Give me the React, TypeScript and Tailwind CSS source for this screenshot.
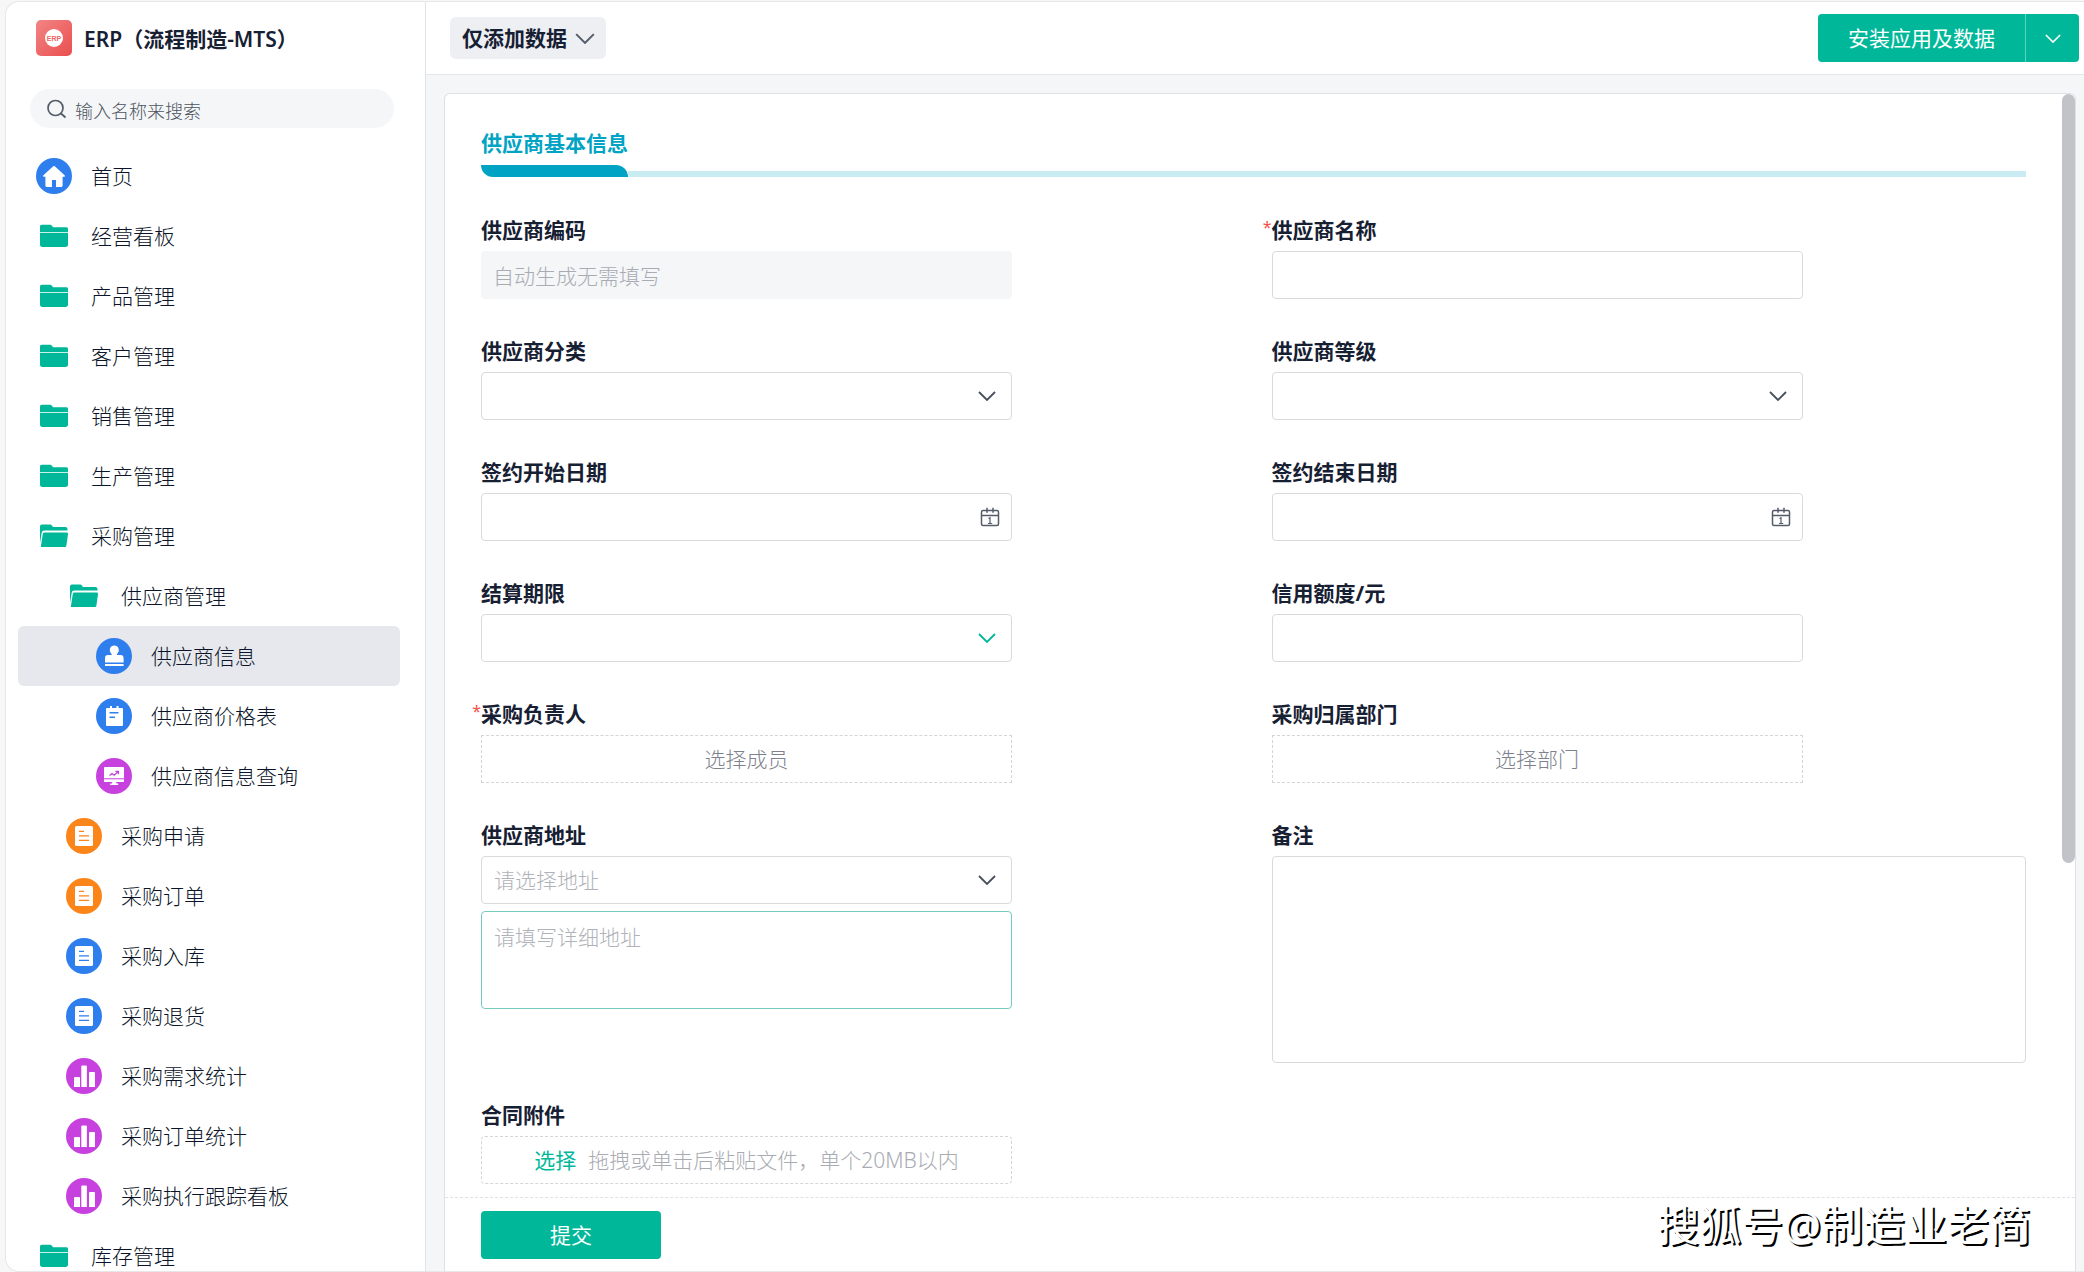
import React from "react";

type IconKind = "home" | "folder" | "folderOpen" | "stamp" | "note" | "screen" | "doc" | "chart";

type NavItem = { label: string; icon: IconKind; tone?: "blue" | "orange" | "purple"; level: 0 | 1 | 2; active?: boolean };

const NAV: NavItem[] = [
  { label: "首页", icon: "home", tone: "blue", level: 0 },
  { label: "经营看板", icon: "folder", level: 0 },
  { label: "产品管理", icon: "folder", level: 0 },
  { label: "客户管理", icon: "folder", level: 0 },
  { label: "销售管理", icon: "folder", level: 0 },
  { label: "生产管理", icon: "folder", level: 0 },
  { label: "采购管理", icon: "folderOpen", level: 0 },
  { label: "供应商管理", icon: "folderOpen", level: 1 },
  { label: "供应商信息", icon: "stamp", tone: "blue", level: 2, active: true },
  { label: "供应商价格表", icon: "note", tone: "blue", level: 2 },
  { label: "供应商信息查询", icon: "screen", tone: "purple", level: 2 },
  { label: "采购申请", icon: "doc", tone: "orange", level: 1 },
  { label: "采购订单", icon: "doc", tone: "orange", level: 1 },
  { label: "采购入库", icon: "doc", tone: "blue", level: 1 },
  { label: "采购退货", icon: "doc", tone: "blue", level: 1 },
  { label: "采购需求统计", icon: "chart", tone: "purple", level: 1 },
  { label: "采购订单统计", icon: "chart", tone: "purple", level: 1 },
  { label: "采购执行跟踪看板", icon: "chart", tone: "purple", level: 1 },
  { label: "库存管理", icon: "folder", level: 0 },
];

const INDENT = { 0: "pl-[18px]", 1: "pl-[48px]", 2: "pl-[78px]" };
const TONE = { blue: "#2f7eee", orange: "#fc8519", purple: "#c741de" };

function NavIcon({ kind, tone }: { kind: IconKind; tone?: keyof typeof TONE }) {
  const c = tone ? TONE[tone] : "#00b899";
  return (
    <svg viewBox="0 0 36 36" className="size-9 shrink-0" aria-hidden="true">
      {tone && <circle cx="18" cy="18" r="18" fill={c} />}
      {kind === "home" && (
        <path
          fill="#fff"
          d="M17.2 8.3a1.2 1.2 0 0 1 1.6 0l9.8 8.9c.6.6.3 1.6-.6 1.6h-1.400v8.600c0 .9-.6 1.500-1.400 1.500H20v-7h-4v7h-5.200c-.8 0-1.400-.6-1.400-1.500v-8.600H8c-.9 0-1.200-1-.6-1.600z"
        />
      )}
      {kind === "folder" && (
        <>
          <path fill={c} d="M4 14V8.500C4 7.400 4.800 6.700 5.800 6.700h8.400c.8 0 1.300.4 1.700 1l1.200 1.500h13.200c1 0 1.700.7 1.700 1.700V14z" />
          <path fill="#c9f0e8" d="M4 14h28v1H4z" />
          <path fill={c} d="M4 15h28v11.800c0 1.300-1 2.200-2.200 2.200H6.200C5 29 4 28.100 4 26.800z" />
        </>
      )}
      {kind === "folderOpen" && (
        <>
          <path fill={c} d="M4 25V8.500C4 7.400 4.800 6.500 5.800 6.500h8.400c.8 0 1.300.4 1.700 1L17 9h12.300c1.200 0 2.200.9 2.200 2v1.500H8.500c-1.500 0-2.500.8-2.800 2.200z" />
          <path fill={c} d="M8.600 14.600h22c.9 0 1.500.7 1.400 1.600l-1.600 11.300c-.2 1-.9 1.500-1.900 1.500H4.800l2-13c.2-.9.900-1.400 1.800-1.400z" />
        </>
      )}
      {kind === "stamp" && (
        <>
          <path
            fill="#fff"
            d="M18.300 7.600a4.600 4.600 0 0 1 3.200 7.900c-.6.600-.7 1-.7 1.600h4c1.600 0 2.800 1.200 2.800 2.800v4.600H9v-4.600c0-1.600 1.200-2.800 2.800-2.800h4c0-.6-.1-1-.7-1.600a4.600 4.600 0 0 1 3.200-7.900z"
          />
          <rect x="9" y="26" width="18.600" height="2" fill="#fff" />
        </>
      )}
      {kind === "note" && (
        <>
          <rect x="10" y="10" width="17" height="18" rx="1" fill="#fff" />
          <path fill="#fff" d="M14 8h2v3h-2zM20.500 8h2v3h-2z" />
          <path stroke={c} strokeWidth="1.400" d="M13.500 14.800h9M13.500 19.200h5.500" />
        </>
      )}
      {kind === "screen" && (
        <>
          <rect x="8" y="9" width="20" height="15" rx=".8" fill="#fff" />
          <path stroke={c} strokeWidth="1" d="M8 20.800h20" />
          <path fill="none" stroke={c} strokeWidth="1.300" d="m13.500 17.500 2.500-2 2.200 1.700 4-3.700M19.400 13.300h3v3" />
          <path fill="#fff" d="M16.500 24h3.500l.6 1.500h1.600V27h-8v-1.500h1.700z" />
        </>
      )}
      {kind === "doc" && (
        <>
          <rect x="9" y="8" width="18" height="20" rx="1.600" fill="#fff" />
          <path stroke={c} strokeWidth="1.300" d="M13 13.400h5M13 17.800h10M13 22.400h10" />
        </>
      )}
      {kind === "chart" && (
        <path
          fill="#fff"
          d="M9 18.900h4a1 1 0 0 1 1 1V29H8v-9.100a1 1 0 0 1 1-1zM16.300 7.400h3.600a1 1 0 0 1 1 1V29h-5.600V8.400a1 1 0 0 1 1-1zM24 14h4a1 1 0 0 1 1 1v14h-6V15a1 1 0 0 1 1-1z"
        />
      )}
    </svg>
  );
}

function Chevron({ className }: { className: string }) {
  return (
    <svg viewBox="0 0 18 10" className={className} fill="none" stroke="currentColor" strokeWidth="1.800" aria-hidden="true">
      <path d="m1 1 8 8 8-8" />
    </svg>
  );
}

function CalendarIcon() {
  return (
    <svg viewBox="0 0 20 20" className="pointer-events-none absolute right-3 top-1/2 size-5 -translate-y-1/2 text-[#545b69]" fill="none" stroke="currentColor" strokeWidth="1.500" aria-hidden="true">
      <rect x="1.500" y="3.500" width="17" height="15" rx="1.500" />
      <path d="M1.500 8.500h17M7 .8v5M13 .8v5" />
      <path strokeWidth="1.200" d="M8.500 11.500 10 10.800v5.700M8 16.500h4.200" />
    </svg>
  );
}

const LABEL = "mb-1.5 block text-[21px] leading-[30px] font-bold";
const BOX = "h-12 w-full rounded border border-[#d8dade] bg-white px-3 text-[21px] font-light outline-none placeholder:text-[#b9bbc1]";
const PICKER = "h-12 w-full border border-dashed border-[#d3d5d9] pt-0.5 font-light text-[#7d828d]";

function Field({ id, label, required, wide, children }: { id: string; label: string; required?: boolean; wide?: boolean; children: React.ReactNode }) {
  return (
    <div className={wide ? "w-full" : "w-[531px] max-w-full"}>
      <label htmlFor={id} className={LABEL + " relative"}>
        {required && <span className="absolute right-full text-base font-normal text-[#f0514a]">*</span>}
        {label}
      </label>
      {children}
    </div>
  );
}

function SelectBox({ id, placeholder, tone }: { id: string; placeholder?: string; tone?: string }) {
  return (
    <div className="relative">
      <select id={id} className={BOX + " appearance-none pt-0.5 text-[#b0b2b9]"} defaultValue="">
        <option value="">{placeholder ?? ""}</option>
      </select>
      <Chevron className={"pointer-events-none absolute right-4 top-1/2 h-[10px] w-[18px] -translate-y-1/2 " + (tone ?? "text-[#474e5d]")} />
    </div>
  );
}

function DateBox({ id }: { id: string }) {
  return (
    <div className="relative">
      <input id={id} type="text" className={BOX} />
      <CalendarIcon />
    </div>
  );
}

export default function App() {
  return (
    <div className="h-screen overflow-hidden bg-[#f7f7f8] pt-px pl-[5px] font-['Noto_Sans','Noto_Sans_CJK_SC',sans-serif] text-[21px] text-[#172033]">
      <div className="flex h-full overflow-hidden rounded-l-[14px] border border-r-0 border-[#e6e7e9] bg-white">
        <aside className="flex w-[420px] shrink-0 flex-col border-r border-[#e1e3e6]">
          <div className="flex h-[72px] shrink-0 items-center gap-3 pl-[30px]">
            <svg viewBox="0 0 36 36" className="size-9" aria-hidden="true">
              <defs>
                <linearGradient id="logo" x1="0" y1="0" x2="1" y2="1">
                  <stop offset="0" stopColor="#f28585" />
                  <stop offset="1" stopColor="#ea4e4e" />
                </linearGradient>
              </defs>
              <rect width="36" height="36" rx="5" fill="url(#logo)" />
              <circle cx="18" cy="18" r="9" fill="#fff" />
              <text x="18" y="20.500" textAnchor="middle" fontSize="7" fontWeight="700" fill="#ee6464" fontFamily="Liberation Sans">ERP</text>
            </svg>
            <h1 className="pt-1 font-semibold">ERP（流程制造-MTS）</h1>
          </div>
          <div className="mt-[15px] mr-[31px] mb-[18px] ml-6 flex h-[39px] shrink-0 items-center gap-2 rounded-full bg-[#f4f6f8] pl-[17px]">
            <svg viewBox="0 0 20 20" className="size-5 text-[#545b69]" fill="none" stroke="currentColor" strokeWidth="1.700" aria-hidden="true">
              <circle cx="8.500" cy="9" r="7.500" />
              <path d="m14 14.500 4.500 4" />
            </svg>
            <input type="search" aria-label="输入名称来搜索" placeholder="输入名称来搜索" className="min-w-0 flex-1 bg-transparent pt-1 text-lg font-light outline-none placeholder:text-[#4d5460]" />
          </div>
          <nav className="min-h-0 flex-1 overflow-hidden pr-[25px] pl-3">
            {NAV.map((n) => (
              <a
                key={n.label}
                href="#"
                aria-current={n.active ? "page" : undefined}
                className={"flex h-[60px] items-center gap-[19px] rounded-md font-light " + INDENT[n.level] + (n.active ? " bg-[#e6e8ed]" : "")}
              >
                <NavIcon kind={n.icon} tone={n.tone} />
                <span className="pt-0.5 whitespace-nowrap text-[#0b1428]">{n.label}</span>
              </a>
            ))}
          </nav>
        </aside>

        <main className="flex min-w-0 flex-1 flex-col bg-[#f4f6f8]">
          <header className="flex h-[73px] shrink-0 items-center justify-between border-b border-[#e6e7e9] bg-white pr-[5px] pl-6">
            <button type="button" className="flex h-[42px] items-center gap-2 rounded-md bg-[#edeff3] pr-[11px] pl-3 font-bold">
              <span className="pt-0.5">仅添加数据</span>
              <Chevron className="h-[11px] w-5 text-[#545b69]" />
            </button>
            <div className="flex h-12 overflow-hidden rounded bg-[#00b899] text-white">
              <button type="button" className="px-[30px] pt-0.5">安装应用及数据</button>
              <button type="button" aria-label="更多安装选项" className="flex w-[54px] items-center justify-center border-l border-[#5fd2be]">
                <Chevron className="h-[9px] w-4" />
              </button>
            </div>
          </header>

          <form className="relative mt-[18px] mr-2 ml-[18px] flex min-h-0 flex-1 flex-col rounded-t-md border border-b-0 border-[#dfe1e5] bg-white" onSubmit={(e) => e.preventDefault()}>
            <div className="min-h-0 flex-1 overflow-hidden pt-[33px] pr-[49px] pl-9">
              <div className="mb-[38px] flex items-end">
                <h2 className="font-bold text-[#00a3c4]">
                  <span className="mb-[5px] block leading-[33px]">供应商基本信息</span>
                  <span className="block h-3 rounded-tr-xl rounded-bl-xl bg-[#00a3c4]" />
                </h2>
                <div className="h-1.5 flex-1 bg-[#c9ecf2]" />
              </div>

              <div className="grid grid-cols-2 gap-x-9 gap-y-[37px]">
                <Field id="code" label="供应商编码">
                  <input id="code" disabled placeholder="自动生成无需填写" className="h-12 w-full rounded bg-[#f4f6f8] px-3 pt-0.5 font-light placeholder:text-[#a9abb3]" />
                </Field>
                <Field id="name" label="供应商名称" required>
                  <input id="name" type="text" className={BOX} />
                </Field>
                <Field id="category" label="供应商分类">
                  <SelectBox id="category" />
                </Field>
                <Field id="grade" label="供应商等级">
                  <SelectBox id="grade" />
                </Field>
                <Field id="start" label="签约开始日期">
                  <DateBox id="start" />
                </Field>
                <Field id="end" label="签约结束日期">
                  <DateBox id="end" />
                </Field>
                <Field id="term" label="结算期限">
                  <SelectBox id="term" tone="text-[#00b899]" />
                </Field>
                <Field id="credit" label="信用额度/元">
                  <input id="credit" type="text" className={BOX} />
                </Field>
                <Field id="owner" label="采购负责人" required>
                  <button id="owner" type="button" className={PICKER}>选择成员</button>
                </Field>
                <Field id="dept" label="采购归属部门">
                  <button id="dept" type="button" className={PICKER}>选择部门</button>
                </Field>
                <Field id="region" label="供应商地址">
                  <SelectBox id="region" placeholder="请选择地址" />
                  <textarea aria-label="详细地址" placeholder="请填写详细地址" className="mt-[7px] block h-[98px] w-full resize-none rounded border border-[#74cbbd] px-3 py-2.5 leading-[30px] font-light outline-none placeholder:text-[#b0b2b9]" />
                </Field>
                <Field id="remark" label="备注" wide>
                  <textarea id="remark" className="block h-[207px] w-full resize-none rounded border border-[#d8dade] px-3 py-2 outline-none" />
                </Field>
                <Field id="contract" label="合同附件">
                  <label className="flex h-12 w-full cursor-pointer items-center justify-center gap-3 rounded border border-dashed border-[#d3d5d9] pt-0.5 font-light">
                    <input id="contract" type="file" className="sr-only" />
                    <span className="font-normal text-[#00b899]">选择</span>
                    <span className="text-[#a9abb3]">拖拽或单击后粘贴文件，单个20MB以内</span>
                  </label>
                </Field>
              </div>
            </div>

            <div className="flex h-[74px] shrink-0 items-start justify-between border-t border-dashed border-[#dfe1e5] pt-[13px] pr-11 pl-9">
              <button type="submit" className="h-12 w-[180px] rounded bg-[#00b899] pt-0.5 text-white">提交</button>
              <p className="-mt-4 text-[42px] leading-[60px] whitespace-nowrap text-white [text-shadow:2px_2px_0_#000]">搜狐号@制造业老简</p>
            </div>
            <div className="absolute top-0 right-0 h-[65.3%] w-[13px] rounded-full bg-[#c0c3c8]" />
          </form>
        </main>
      </div>
    </div>
  );
}
